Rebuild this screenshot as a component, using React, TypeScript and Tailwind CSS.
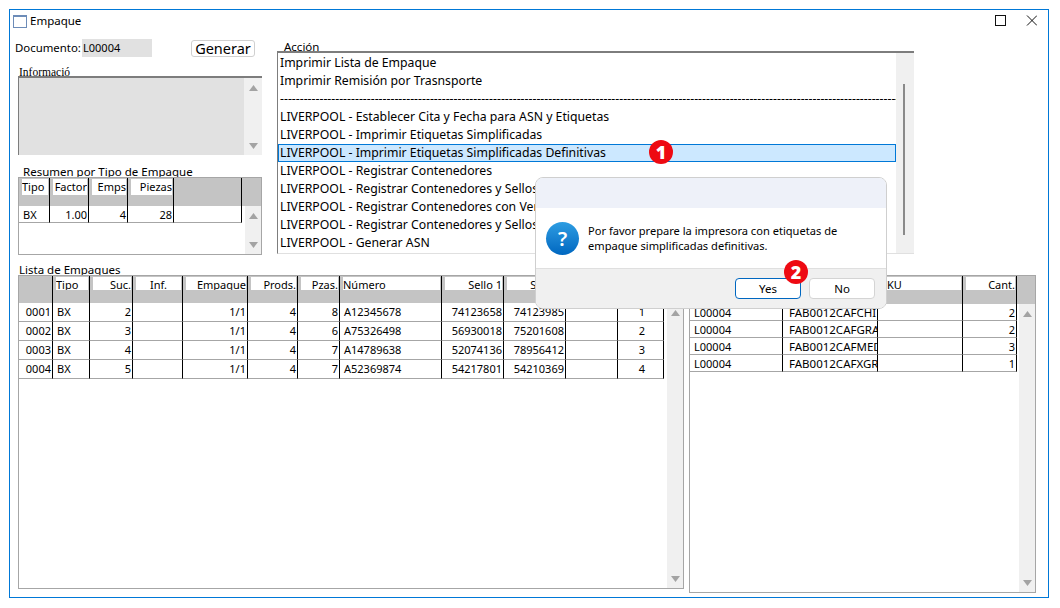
import React from "react";

type Col = { w: string; h?: string; a?: string; blank?: boolean; cls?: string };

function Arrow({ down }: { down?: boolean }) {
  return (
    <svg width="9" height="6" viewBox="0 0 9 6" className="block">
      <polygon points={down ? "0,0 9,0 4.5,6" : "0,6 9,6 4.5,0"} fill="#a3a3a3" />
    </svg>
  );
}

function Scroll({ w, children, bare }: { w: string; children?: React.ReactNode; bare?: boolean }) {
  return (
    <div className={`${w} relative self-stretch bg-[#f0f0f0] flex flex-col items-center justify-between pt-[7px] pb-[6px] shrink-0`}>
      {!bare && <Arrow />}
      {children}
      {!bare && <Arrow down />}
    </div>
  );
}

function Grid({
  cols,
  rows,
  rowH,
  outer,
  headH,
  scrollW,
  whiteH,
}: {
  cols: Col[];
  rows: string[][];
  rowH: string;
  outer: string;
  headH: string;
  scrollW: string;
  whiteH: string;
}) {
  return (
    <div className={`${outer} border border-[#a6a6a6] flex flex-col shrink-0 bg-white`}>
      <div className={`${headH} flex bg-[#c4c4c4] shrink-0`}>
        {cols.map((c, i) => (
          <div key={i} className={`${c.w} shrink-0 border-r border-black pl-[3px] pr-[1px] pt-[1px]`}>
            {!c.blank && (
              <div className={`${whiteH} bg-white overflow-hidden whitespace-nowrap ${c.a ?? "text-left"}`}>{c.h}</div>
            )}
          </div>
        ))}
      </div>
      <div className="flex flex-1 min-h-0">
        <div className="flex-1 flex flex-col">
          {rows.map((r, i) => (
            <div key={i} className={`${rowH} flex shrink-0`}>
              {cols.map((c, j) => (
                <div
                  key={j}
                  className={`${c.w} shrink-0 border-r border-r-black border-b border-b-[#a6a6a6] ${c.cls ?? "pl-[4px]"} pr-[1px] overflow-hidden whitespace-nowrap leading-[17px] ${c.a ?? "text-left"}`}
                >
                  {r[j]}
                </div>
              ))}
            </div>
          ))}
        </div>
        <Scroll w={scrollW} />
      </div>
    </div>
  );
}

function Badge({ n, pos }: { n: string; pos: string }) {
  return (
    <div className={`absolute ${pos} w-[24px] h-[24px] rounded-full bg-[#ee0a12] text-white font-extrabold text-[18px] leading-[24px] text-center font-['Open_Sans',sans-serif]`}>
      {n}
    </div>
  );
}

const left: Col[] = [
  { w: "w-[34px]", blank: true, a: "text-right", cls: "pl-[2px]" },
  { w: "w-[37px]", h: "Tipo" },
  { w: "w-[43px]", h: "Suc.", a: "text-right" },
  { w: "w-[50px]", h: "Inf.", a: "text-center" },
  { w: "w-[65px]", h: "Empaque", a: "text-right" },
  { w: "w-[50px]", h: "Prods.", a: "text-right" },
  { w: "w-[42px]", h: "Pzas.", a: "text-right" },
  { w: "w-[102px]", h: "Número" },
  { w: "w-[62px]", h: "Sello 1", a: "text-right" },
  { w: "w-[62px]", h: "Sello 2", a: "text-right" },
  { w: "w-[52px]", h: "", a: "text-center" },
  { w: "w-[46px]", h: "", a: "text-center" },
];

const leftRows = [
  ["0001", "BX", "2", "", "1/1", "4", "8", "A12345678", "74123658", "74123985", "", "1"],
  ["0002", "BX", "3", "", "1/1", "4", "6", "A75326498", "56930018", "75201608", "", "2"],
  ["0003", "BX", "4", "", "1/1", "4", "7", "A14789638", "52074136", "78956412", "", "3"],
  ["0004", "BX", "5", "", "1/1", "4", "7", "A52369874", "54217801", "54210369", "", "4"],
];

const right: Col[] = [
  { w: "w-[93px]", h: "" },
  { w: "w-[95px]", h: "", cls: "pl-[6px] text-[11.5px]" },
  { w: "w-[85px]", h: "SKU" },
  { w: "w-[54px]", h: "Cant.", a: "text-right" },
];

const rightRows = [
  ["L00004", "FAB0012CAFCHI", "", "2"],
  ["L00004", "FAB0012CAFGRA", "", "2"],
  ["L00004", "FAB0012CAFMED", "", "3"],
  ["L00004", "FAB0012CAFXGR", "", "1"],
];

const summary: Col[] = [
  { w: "w-[31px]", h: "Tipo" },
  { w: "w-[39px]", h: "Factor", a: "text-right" },
  { w: "w-[39px]", h: "Emps", a: "text-right" },
  { w: "w-[46px]", h: "Piezas", a: "text-right" },
  { w: "w-[68px]", blank: true },
];

const actions = [
  "Imprimir Lista de Empaque",
  "Imprimir Remisión por Trasnsporte",
  "-".repeat(200),
  "LIVERPOOL - Establecer Cita y Fecha para ASN y Etiquetas",
  "LIVERPOOL - Imprimir Etiquetas Simplificadas",
  "LIVERPOOL - Imprimir Etiquetas Simplificadas Definitivas",
  "LIVERPOOL - Registrar Contenedores",
  "LIVERPOOL - Registrar Contenedores y Sellos",
  "LIVERPOOL - Registrar Contenedores con Ventanas",
  "LIVERPOOL - Registrar Contenedores y Sellos",
  "LIVERPOOL - Generar ASN",
];

export default function App() {
  return (
    <div className="w-[1060px] h-[608px] bg-white pt-[9px] pl-[9px] text-black text-[11px] font-['Noto_Sans',sans-serif] overflow-hidden">
      <div className="relative w-[1040px] h-[589px] border border-[#0078d7] flex flex-col">
        <div className="h-[29px] flex items-center pl-[3px] pr-[11px] pb-[7px] shrink-0">
          <div className="w-[14px] h-[13px] border border-[#6d8cb8] border-t-2 bg-white mr-[3px]" />
          <span className="text-[11.5px]">Empaque</span>
          <svg width="42" height="12" viewBox="0 0 42 12" className="ml-auto">
            <rect x="0.5" y="0.5" width="10" height="10" fill="none" stroke="#111" />
            <path d="M32 0.5 L42 10.5 M42 0.5 L32 10.5" stroke="#111" fill="none" />
          </svg>
        </div>

        <div className="pl-[5px] flex flex-col">
          <div className="flex h-[216px]">
            <div className="w-[247px] shrink-0 flex flex-col">
              <div className="h-[18px] flex items-center">
                <span className="w-[67px] text-[11.4px]">Documento:</span>
                <div className="w-[70px] h-[18px] bg-[#e1e1e1] leading-[18px] pl-[1px]">L00004</div>
                <div className="ml-[39px] w-[64px] h-[17px] mt-[1px] border border-[#d0d0d0] rounded-[3px] text-[14.5px] leading-[15px] text-center">
                  Generar
                </div>
              </div>
              <div className="ml-[4px] mt-[8px] h-[11px] overflow-hidden font-['Liberation_Serif',serif] text-[11.5px] leading-[14px]">
                Informació
              </div>
              <div className="ml-[3px] w-[244px] h-[79px] bg-[#e1e1e1] border-t-2 border-l border-t-[#7d7d7d] border-l-[#7d7d7d] flex justify-end shrink-0">
                <Scroll w="w-[18px]" />
              </div>
              <div className="ml-[8px] mt-[11px] h-[11px] overflow-hidden text-[11.5px] leading-[11px]">
                Resumen por Tipo de Empaque
              </div>
              <div className="ml-[3px]">
                <Grid
                  cols={summary}
                  rows={[["BX", "1.00", "4", "28", ""]]}
                  rowH="h-[17px]"
                  outer="w-[244px] h-[78px]"
                  headH="h-[28px]"
                  scrollW="w-[16px]"
                  whiteH="h-[16px] leading-[16px]"
                />
              </div>
            </div>

            <div className="ml-[15px] flex flex-col">
              <div className="h-[12px] pl-[7px] text-[11.5px] leading-[15px] overflow-hidden">Acción</div>
              <div className="w-[637px] h-[203px] border-t-2 border-l border-t-[#7d7d7d] border-l-[#7d7d7d] border-b border-b-[#e0e0e0] flex">
                <div className="flex-1 min-w-0 flex flex-col text-[12.25px] pt-[1px]">
                  {actions.map((a, i) => (
                    <div
                      key={i}
                      className={`h-[18px] shrink-0 overflow-hidden whitespace-nowrap ${
                        i === 5
                          ? "bg-[#cce8ff] border border-[#0078d7] pl-[1px] leading-[15px]"
                          : "pl-[2px] leading-[17px]"
                      }`}
                    >
                      {a}
                    </div>
                  ))}
                </div>
                <Scroll w="w-[18px]" bare>
                  <div className="absolute left-[7px] top-[31px] w-[2px] h-[151px] bg-[#8a8a8a]" />
                </Scroll>
              </div>
            </div>
          </div>

          <div className="ml-[4px] mt-[10px] h-[10px] overflow-hidden text-[11.5px] leading-[10px]">Lista de Empaques</div>
          <div className="ml-[3px] flex items-start">
            <Grid
              cols={left}
              rows={leftRows}
              rowH="h-[19px]"
              outer="w-[666px] h-[314px]"
              headH="h-[27px]"
              scrollW="w-[16px]"
              whiteH="h-[13px] leading-[15px]"
            />
            <div className="ml-[5px]">
              <Grid
                cols={right}
                rows={rightRows}
                rowH="h-[17px]"
                outer="w-[347px] h-[318px]"
                headH="h-[28px]"
                scrollW="w-[16px]"
                whiteH="h-[13px] leading-[15px]"
              />
            </div>
          </div>
        </div>

        <Badge n="1" pos="left-[639px] top-[130px]" />

        <div className="absolute left-[525px] top-[167px] w-[352px] h-[132px] rounded-[8px] border border-[#cfcfcf] overflow-hidden flex flex-col bg-white">
          <div className="h-[30px] bg-[#eef1f9] shrink-0" />
          <div className="h-[60px] flex items-center pl-[10px] shrink-0 bg-white">
            <div className="w-[33px] h-[33px] rounded-full bg-gradient-to-b from-[#2d9de2] to-[#0067c0] text-white font-semibold text-[20px] leading-[33px] text-center shrink-0">
              ?
            </div>
            <div className="ml-[9px] w-[270px] text-[11.1px] leading-[15px]">
              Por favor prepare la impresora con etiquetas de empaque simplificadas definitivas.
            </div>
          </div>
          <div className="flex-1 bg-[#f0f0f0] border-t border-[#dfdfdf] flex justify-end items-start pt-[9px] pr-[11px] gap-[8px] text-[11.5px]">
            <div className="w-[66px] h-[21px] bg-white border border-[#0067c0] rounded-[4px] text-center leading-[20px]">Yes</div>
            <div className="w-[66px] h-[21px] bg-white border border-[#d4d4d4] rounded-[4px] text-center leading-[20px]">No</div>
          </div>
        </div>

        <Badge n="2" pos="left-[774px] top-[250px]" />
      </div>
    </div>
  );
}
